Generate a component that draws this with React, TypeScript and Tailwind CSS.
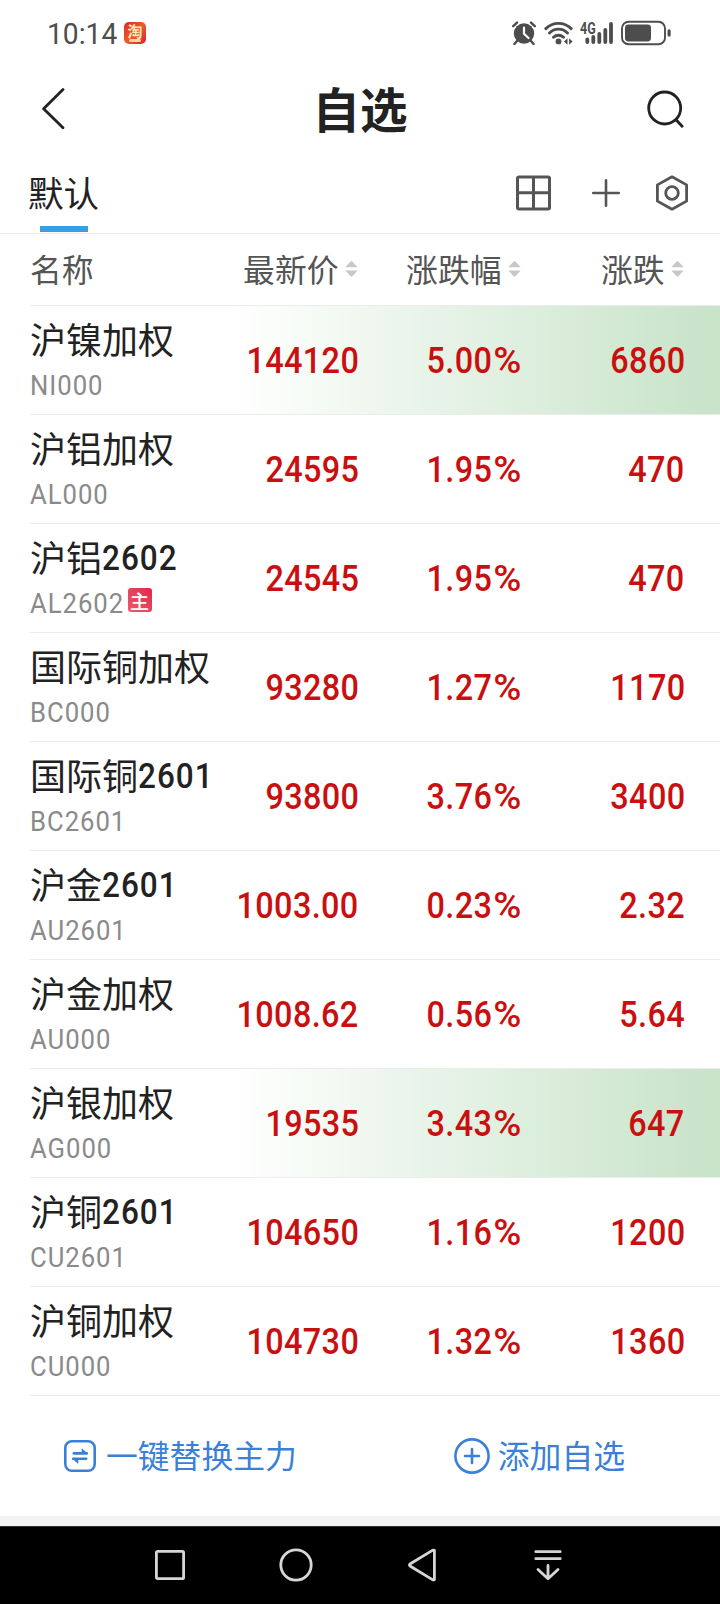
import React from 'react';

interface Quote {
    name: string;
    digits?: string;
    code: string;
    price: string;
    percent: string;
    change: string;
    main?: boolean;
    flash?: boolean;
}

const quotes: Quote[] = [
    { name: '沪镍加权', code: 'NI000', price: '144120', percent: '5.00', change: '6860', flash: true },
    { name: '沪铝加权', code: 'AL000', price: '24595', percent: '1.95', change: '470' },
    { name: '沪铝', digits: '2602', code: 'AL2602', price: '24545', percent: '1.95', change: '470', main: true },
    { name: '国际铜加权', code: 'BC000', price: '93280', percent: '1.27', change: '1170' },
    { name: '国际铜', digits: '2601', code: 'BC2601', price: '93800', percent: '3.76', change: '3400' },
    { name: '沪金', digits: '2601', code: 'AU2601', price: '1003.00', percent: '0.23', change: '2.32' },
    { name: '沪金加权', code: 'AU000', price: '1008.62', percent: '0.56', change: '5.64' },
    { name: '沪银加权', code: 'AG000', price: '19535', percent: '3.43', change: '647', flash: true },
    { name: '沪铜', digits: '2601', code: 'CU2601', price: '104650', percent: '1.16', change: '1200' },
    { name: '沪铜加权', code: 'CU000', price: '104730', percent: '1.32', change: '1360' },
];

const StatusBar = () => (
    <div className="flex h-[66px] items-center pl-[47px] pr-[49px] text-[#4d4d4d]">
        <span className="mt-0.5 w-[72px] origin-left scale-x-[.94] font-['Roboto',sans-serif] text-[30px] leading-none">10:14</span>
        {/* Notification icon */}
        <span className="ml-[5px] flex h-[22px] w-[22px] flex-col items-center rounded-[5px] bg-gradient-to-br from-[#d9242b] via-[#f05a28] to-[#cf1f35] text-[#fde9b5]">
            <span className="text-[15px] font-bold leading-[17px]">淘</span>
            <span className="h-[3px] w-3 rounded-full bg-[#fbd3a0]" />
        </span>
        <div className="ml-auto flex items-center">
            <svg width="24" height="24" viewBox="0 0 24 24" fill="none">
                <circle cx="12" cy="12.5" r="10.2" fill="currentColor" />
                <path d="M1.2 5.2 5 1.6M22.8 5.2 19 1.6M5 20l-2.6 3M19 20l2.6 3" stroke="currentColor" strokeWidth="2.4" strokeLinecap="round" />
                <path d="M12 6.5v6.2l4.5 4.3" stroke="#fff" strokeWidth="2.2" strokeLinecap="round" strokeLinejoin="round" />
            </svg>
            <svg className="ml-2" width="29" height="24" viewBox="0 0 29 24" fill="none" stroke="currentColor" strokeWidth="2.9" strokeLinecap="round">
                <path d="M1.8 7.6a18 18 0 0 1 25.4 0M5.5 12a12.5 12.5 0 0 1 18 0M9.5 16.2a7.2 7.2 0 0 1 10 0" />
                <circle cx="14.5" cy="20.4" r="2.9" fill="currentColor" stroke="none" />
                <path d="M23.5 17.3v6.4l-3.5-3.2zM25.1 17.3v6.4l3.5-3.2z" fill="currentColor" stroke="none" />
            </svg>
            <div className="relative ml-2 h-6 w-8">
                <span className="absolute -left-px top-0 origin-left scale-x-[.78] font-['Roboto',sans-serif] text-[16px] font-bold leading-none">4G</span>
                <svg width="32" height="24" viewBox="0 0 32 24" stroke="currentColor" strokeWidth="3.8" strokeLinecap="round">
                    <path d="M6.3 18.3v2.8M12.3 16v5.1M18.3 13v8.1M24.3 8.8v12.3M30 3v18.1" />
                </svg>
            </div>
            <svg className="ml-2" width="50" height="26" viewBox="0 0 50 26" fill="none">
                <rect x="1" y="1.8" width="43" height="22.4" rx="6.5" stroke="currentColor" strokeWidth="1.9" />
                <rect x="4" y="4.6" width="26" height="16.8" rx="3.4" fill="currentColor" />
                <rect x="46.5" y="9.3" width="3.2" height="7.4" rx="1.6" fill="currentColor" />
            </svg>
        </div>
    </div>
);

const TitleBar = () => (
    <div className="flex h-[84px] items-center justify-between pl-[41px] pr-9 text-[#222]">
        <svg width="24" height="42" viewBox="0 0 24 42" fill="none" stroke="currentColor" strokeWidth="2.8" strokeLinecap="round" strokeLinejoin="round">
            <path d="M22 2.5 2.6 21.7 22 40.8" />
        </svg>
        <h1 className="-mt-px ml-2 text-[47.5px] font-bold leading-none">自选</h1>
        <svg className="mt-0.5" width="37" height="38" viewBox="0 0 37 38" fill="none" stroke="currentColor" strokeWidth="2.8" strokeLinecap="round">
            <circle cx="17.7" cy="18" r="16" />
            <path d="m29.3 30 5.8 6.3" />
        </svg>
    </div>
);

const TabBar = () => (
    <div className="flex h-[84px] items-end justify-between border-b border-[#ececec] pl-7 pr-8 text-[#555]">
        <div className="flex flex-col items-center">
            <span className="text-[35.5px] leading-none text-[#222]">默认</span>
            <span className="mb-px ml-px mt-[17px] h-1.5 w-12 bg-[#369fe5]" />
        </div>
        <div className="flex items-center pb-[22px]">
            <svg width="35" height="36" viewBox="0 0 35 36" fill="none" stroke="currentColor" strokeWidth="3">
                <rect x="1.5" y="1.9" width="32" height="32" rx="1.5" />
                <path d="M17.5 2v32M2 17.7h31" />
            </svg>
            <svg className="ml-[41px]" width="28" height="36" viewBox="0 0 28 36" fill="none" stroke="currentColor" strokeWidth="2.6" strokeLinecap="round">
                <path d="M14 5.2v25.6M1.2 18h25.6" />
            </svg>
            <svg className="ml-9" width="32" height="36" viewBox="0 0 32 36" fill="none" stroke="currentColor" strokeWidth="2.8" strokeLinejoin="round">
                <path d="M16 1.8 30.6 9.9v16.2L16 34.2 1.4 26.1V9.9z" />
                <circle cx="16" cy="18" r="6.3" />
            </svg>
        </div>
    </div>
);

const SortIcon = () => (
    <svg className="ml-[6px] mt-px" width="13" height="18" viewBox="0 0 13 18" fill="#c8c8c8">
        <path d="M.3 7.2 5.6 1.6q.9-.9 1.8 0l5.3 5.6zM.3 10.6h12.4L7.4 16.2q-.9.9-1.8 0z" />
    </svg>
);

const TableHead = () => (
    <div className="flex h-[71px] items-center pb-0.5 pl-[30px] pr-9 text-[31.8px] leading-none text-[#555]">
        <div className="w-[155px]">名称</div>
        <div className="flex w-[172.5px] items-center justify-end">最新价<SortIcon /></div>
        <div className="flex w-[163px] items-center justify-end">涨跌幅<SortIcon /></div>
        <div className="flex w-[163px] items-center justify-end">涨跌<SortIcon /></div>
    </div>
);

const Figure = ({ value, unit }: { value: string; unit?: string }) => (
    <span className="-mr-px mt-px inline-block origin-right scale-x-[.9] font-['Roboto',sans-serif] text-[36px] font-medium leading-none tracking-[.4px] text-[#c90f0f]">
        {value}
        {unit && <span className="ml-[6px] inline-block origin-right scale-x-[1.18] tracking-normal">{unit}</span>}
    </span>
);

const QuoteRow = ({ quote }: { quote: Quote }) => (
    <div className={`ml-[30px] flex h-[109px] items-center border-t border-[#ececec] pr-9 ${quote.flash ? 'bg-linear-to-r from-white from-29% to-[#c7e3c8]' : ''}`}>
        <div className="w-[190px] whitespace-nowrap pt-0.5">
            <div className="flex h-9 items-center text-[36px] leading-none text-[#222]">
                <span className="-mt-1">{quote.name}</span>
                {quote.digits && (
                    <span className="origin-left scale-x-[.9] font-['Roboto',sans-serif] text-[35px] font-medium tracking-[1.1px]">{quote.digits}</span>
                )}
            </div>
            <div className="mt-[14px] flex h-7 items-center text-[#8a8a8a]">
                <span className="origin-left scale-x-[.9] font-['Roboto',sans-serif] text-[28.5px] leading-none tracking-[1.1px]">{quote.code}</span>
                {quote.main && (
                    <span className="-ml-[7px] -mt-2 flex h-6 w-6 items-center justify-center rounded-[3px] bg-gradient-to-bl from-[#e0264c] to-[#ec5a6a] text-[19px] font-medium leading-none text-white">主</span>
                )}
            </div>
        </div>
        <div className="w-[138px] text-right"><Figure value={quote.price} /></div>
        <div className="w-[163px] text-right"><Figure value={quote.percent} unit="%" /></div>
        <div className="w-[163px] text-right"><Figure value={quote.change} /></div>
    </div>
);

const Actions = () => (
    <div className="ml-[30px] flex h-[121px] items-center border-t border-[#ececec] text-[31.8px] leading-none text-[#3a80d9]">
        <button className="ml-[34px] flex items-center gap-2.5">
            <svg width="32" height="32" viewBox="0 0 32 32" fill="none" stroke="currentColor" strokeWidth="2.6">
                <rect x="1.3" y="1.3" width="29.4" height="29.4" rx="6.5" />
                <path d="M9.8 13.4h13M22.2 18.8h-13" strokeLinecap="round" />
                <path d="M18.2 9.4v4h4.6zM13.8 22.8v-4H9.2z" strokeWidth="1.2" fill="currentColor" strokeLinejoin="round" />
            </svg>
            <span className="-mt-0.5">一键替换主力</span>
        </button>
        <button className="ml-[157px] flex items-center gap-2">
            <svg width="36" height="36" viewBox="0 0 36 36" fill="none" stroke="currentColor" strokeWidth="2.6" strokeLinecap="round">
                <circle cx="18" cy="18" r="16.6" />
                <path d="M18 11v14M11 18h14" />
            </svg>
            <span className="-mt-0.5">添加自选</span>
        </button>
    </div>
);

const SystemNav = () => (
    <div className="flex h-[78px] items-center border-t border-[#2b2f2e] bg-black pb-0.5 pl-[154px] text-[#d6d6d6]">
        <svg width="32" height="34" viewBox="0 0 32 34" fill="none" stroke="currentColor" strokeWidth="2.8">
            <rect x="2.4" y="3.4" width="27.2" height="27.2" rx="1.2" />
        </svg>
        <svg className="ml-[93px]" width="34" height="34" viewBox="0 0 34 34" fill="none" stroke="currentColor" strokeWidth="2.8">
            <circle cx="17" cy="17" r="15.2" />
        </svg>
        <svg className="ml-[94px]" width="30" height="34" viewBox="0 0 30 34" fill="none" stroke="currentColor" strokeWidth="2.8" strokeLinejoin="round">
            <path d="M27.4 2.4v29.2q-1 .4-2 0L3 18q-1-1 0-2L25.4 2.4q1-.4 2 0z" />
        </svg>
        <svg className="ml-[97px]" width="28" height="34" viewBox="0 0 28 34" fill="none" stroke="currentColor" strokeWidth="2.8" strokeLinecap="round" strokeLinejoin="round">
            <path d="M1.8 3.7h24.4M1.8 10.7h24.4M14 17.5v13M4 21.4l10 9.4 10-9.4" />
        </svg>
    </div>
);

export default function App() {
    return (
        <div className="flex min-h-[1604px] w-[720px] flex-col bg-white font-['Noto_Sans_CJK_SC',sans-serif]">
            <StatusBar />
            <TitleBar />
            <TabBar />
            <TableHead />
            {quotes.map(quote => (
                <QuoteRow key={quote.code} quote={quote} />
            ))}
            <Actions />
            <div className="h-2.5 bg-[#f3f3f3]" />
            <SystemNav />
        </div>
    );
}
